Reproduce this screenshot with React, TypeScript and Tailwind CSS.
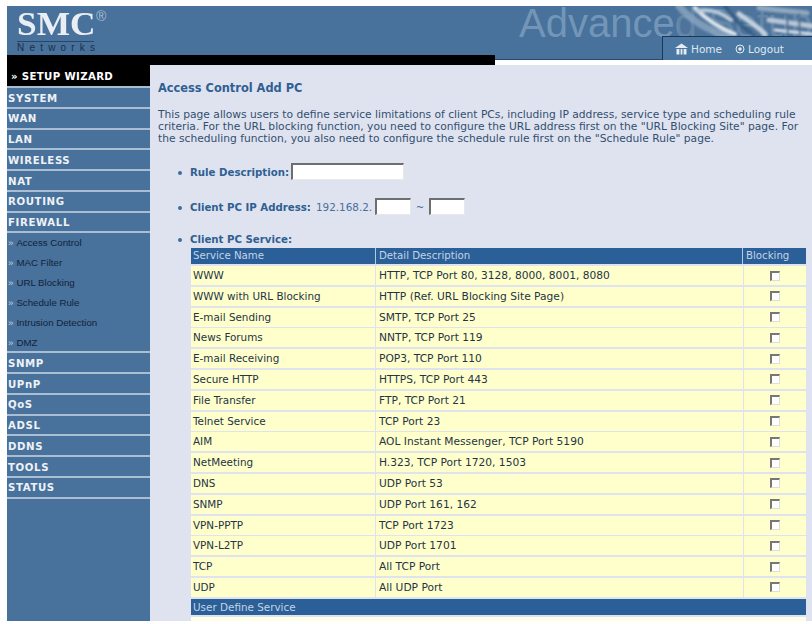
import type { ReactNode } from "react";

const menuTop = ["SYSTEM", "WAN", "LAN", "WIRELESS", "NAT", "ROUTING", "FIREWALL"];
const sub = ["Access Control", "MAC Filter", "URL Blocking", "Schedule Rule", "Intrusion Detection", "DMZ"];
const menuBottom = ["SNMP", "UPnP", "QoS", "ADSL", "DDNS", "TOOLS", "STATUS"];

const rows: [string, string][] = [
  ["WWW", "HTTP, TCP Port 80, 3128, 8000, 8001, 8080"],
  ["WWW with URL Blocking", "HTTP (Ref. URL Blocking Site Page)"],
  ["E-mail Sending", "SMTP, TCP Port 25"],
  ["News Forums", "NNTP, TCP Port 119"],
  ["E-mail Receiving", "POP3, TCP Port 110"],
  ["Secure HTTP", "HTTPS, TCP Port 443"],
  ["File Transfer", "FTP, TCP Port 21"],
  ["Telnet Service", "TCP Port 23"],
  ["AIM", "AOL Instant Messenger, TCP Port 5190"],
  ["NetMeeting", "H.323, TCP Port 1720, 1503"],
  ["DNS", "UDP Port 53"],
  ["SNMP", "UDP Port 161, 162"],
  ["VPN-PPTP", "TCP Port 1723"],
  ["VPN-L2TP", "UDP Port 1701"],
  ["TCP", "All TCP Port"],
  ["UDP", "All UDP Port"],
];

function MenuItem({ label }: { label: string }) {
  return (
    <div className="h-[20.75px] shrink-0 flex items-center pl-px pt-[2px] border-b-2 border-[#a9bdd3] text-[10.2px] font-bold tracking-[0.6px] text-[#eef2f7]">
      {label}
    </div>
  );
}

function Field({ children }: { children: ReactNode }) {
  return (
    <div className="flex items-center text-[10.2px] font-bold text-[#2f5f93]">
      <span className="w-[4px] h-[4px] rounded-full bg-[#3f6d9b] ml-[28px] mr-[8px]" />
      {children}
    </div>
  );
}

function TextBox({ w }: { w: string }) {
  return <div className={`${w} h-[17px] mb-[3px] bg-white border-t-2 border-l-2 border-t-[#6e6e6e] border-l-[#6e6e6e] border-r border-b border-r-[#e8e8e8] border-b-[#e8e8e8]`} />;
}

export default function App() {
  return (
    <div className="w-[812px] h-[624px] overflow-hidden bg-white pt-[6px] pl-[7px] font-['DejaVu_Sans',sans-serif]">
      <header className="relative h-[54px] w-[805px] overflow-hidden bg-[#48719b]">
        <div className="absolute left-[10px] top-[1px] font-['Liberation_Serif',serif] font-bold text-[34px] leading-[34px] text-[#e9eef4] [transform:scaleX(1.04)] origin-left">SMC</div>
        <div className="absolute left-[89px] top-[3px] text-[14px] leading-[14px] text-[#a9bfd4] font-['Liberation_Sans',sans-serif]">®</div>
        <div className="absolute left-[10px] top-[35px] w-[77px] border-t border-[#24486d]" />
        <div className="absolute left-[10px] top-[36px] text-[10px] leading-[11px] tracking-[5.2px] text-[#1c2f45] font-['Liberation_Sans',sans-serif]">Networks</div>
        <div className="absolute left-[512px] top-[-3px] font-['Liberation_Sans',sans-serif] text-[40px] leading-[40px] text-[#7396b8] whitespace-nowrap">Advanced Setup</div>
        <svg className="absolute left-[640px] top-0" width="165" height="30" viewBox="0 0 165 30">
          <defs>
            <filter id="soft"><feGaussianBlur stdDeviation="1.1" /></filter>
          </defs>
          <rect x="30" width="135" height="30" fill="#54789c" opacity="0.55" filter="url(#soft)" />
          <g fill="none" strokeLinecap="round" filter="url(#soft)">
            <path d="M32 0 C42 12 58 24 82 30" stroke="#8ba6c0" strokeWidth="7" opacity="0.8" />
            <path d="M48 2 C60 14 72 22 88 28" stroke="#dbe4ec" strokeWidth="4" />
            <path d="M50 5 C62 3 74 6 84 14" stroke="#b9cada" strokeWidth="4" />
            <path d="M78 0 C84 8 92 20 106 28" stroke="#2f587f" strokeWidth="4" opacity="0.8" />
            <path d="M92 8 C100 14 110 20 118 28" stroke="#c3d1de" strokeWidth="5" />
            <path d="M112 2 L160 7" stroke="#8fa8bf" strokeWidth="5" />
            <path d="M122 14 L165 20" stroke="#b7c6d4" strokeWidth="5" />
            <path d="M128 24 L165 28" stroke="#d4dee7" strokeWidth="3" />
            <path d="M140 8 L141 30 M152 8 L153 30" stroke="#4d7094" strokeWidth="2" />
          </g>
        </svg>
        <div className="absolute left-[488px] bottom-0 w-[167px] h-px bg-[#2a4a6c]" />
        <div className="absolute left-0 top-[49px] w-[488px] h-[5px] bg-black" />
        <div className="absolute left-[655px] top-[30px] w-[150px] h-[24px] bg-[#4b78a3] border-l border-t border-[#1c3653] flex items-center pl-[12px] pt-px gap-[13px] text-[10.5px] leading-none text-[#dfe7ef]">
          <span className="flex items-center gap-[3px]">
            <svg width="13" height="12" viewBox="0 0 13 12" fill="#e6ecf2">
              <path d="M6.5 0.5 L13 5 L0 5 Z" />
              <path d="M1.5 6 H4.4 V11.5 H1.5 Z M5.6 6 H7.4 V11.5 H5.6 Z M8.6 6 H11.5 V11.5 H8.6 Z" />
            </svg>
            Home
          </span>
          <span className="flex items-center gap-[3px]">
            <svg width="10" height="10" viewBox="0 0 10 10" fill="none">
              <circle cx="5" cy="5" r="4" stroke="#e6ecf2" strokeWidth="1" />
              <circle cx="5" cy="5" r="1.7" fill="#e6ecf2" />
            </svg>
            Logout
          </span>
        </div>
      </header>

      <div className="relative flex h-[561px]">
        <div className="absolute left-[143px] top-0 h-[5px] w-[345px] bg-black" />

        <aside className="w-[143px] shrink-0 bg-[#48719b] flex flex-col">
          <div className="h-[28px] shrink-0 bg-black pt-[7px] pl-[4px] text-[10.2px] font-bold tracking-[0.35px] leading-[20px] text-white border-b-2 border-[#a9bdd3]">
            » SETUP WIZARD
          </div>
          {menuTop.map((m) => <MenuItem key={m} label={m} />)}
          <div className="h-[120px] shrink-0 border-b-2 border-[#a9bdd3] font-['Liberation_Sans',sans-serif]">
            {sub.map((s) => (
              <div key={s} className="h-[20px] flex items-center pl-px text-[9.7px] text-[#10233a]">
                <span className="text-[#c3d1df]">»</span>
                <span className="ml-[3px]">{s}</span>
              </div>
            ))}
          </div>
          {menuBottom.map((m) => <MenuItem key={m} label={m} />)}
        </aside>

        <main className="flex-1 mt-[5px] bg-[#dfe3ef] pt-[15px] overflow-hidden">
          <h1 className="pl-[8px] text-[11.4px] leading-[16px] font-bold text-[#2f5f93]">Access Control Add PC</h1>
          <p className="mt-[13px] pl-[8px] text-[10.7px] leading-[12px] text-[#324f70] w-[656px]">
            This page allows users to define service limitations of client PCs, including IP address, service type and scheduling rule criteria. For the URL blocking function, you need to configure the URL address first on the "URL Blocking Site" page. For the scheduling function, you also need to configure the schedule rule first on the "Schedule Rule" page.
          </p>
          <div className="mt-[18px]">
            <Field>
              Rule Description:
              <span className="w-[2px]" />
              <TextBox w="w-[113px]" />
            </Field>
          </div>
          <div className="mt-[15px]">
            <Field>
              Client PC IP Address:
              <span className="ml-[5px] font-normal text-[10.4px] text-[#47709c]">192.168.2.</span>
              <span className="w-[3px]" />
              <TextBox w="w-[36px]" />
              <span className="w-[18px] text-center font-normal text-[#47709c]">~</span>
              <TextBox w="w-[36px]" />
            </Field>
          </div>
          <div className="mt-[16px] leading-[12px]">
            <Field>Client PC Service:</Field>
          </div>
          <div className="ml-[41px] mt-[2px] w-[615px] text-[10.4px] text-[#243446]">
            <div className="grid grid-cols-[184px_367px_62px] gap-x-px h-[16px] leading-[16px] text-[10.2px] text-[#c3d4e6] bg-[#2b5f97] mb-[2px]">
              <span className="pl-[2px]">Service Name</span>
              <span className="pl-[3px] border-l border-[#b9c8da] -ml-px">Detail Description</span>
              <span className="pl-[3px] border-l border-[#b9c8da] -ml-[2px]">Blocking</span>
            </div>
            {rows.map(([a, b]) => (
              <div key={a} className="grid grid-cols-[184px_367px_62px] gap-x-px h-[19px] mb-[1.8px] leading-[19px]">
                <span className="bg-[#ffffcc] pl-[2px]">{a}</span>
                <span className="bg-[#ffffcc] pl-[3px] text-[10.67px]">{b}</span>
                <span className="bg-[#ffffcc] flex items-center justify-center">
                  <span className="w-[10px] h-[10px] bg-white border-t-2 border-l-2 border-t-[#777] border-l-[#777] border-r border-b border-r-[#ddd] border-b-[#ddd]" />
                </span>
              </div>
            ))}
            <div className="h-[16px] leading-[16px] mt-[2px] pl-[2px] bg-[#2b5f97] text-[#c3d4e6]">User Define Service</div>
            <div className="h-[4px] mt-[2px] bg-[#ffffe8]" />
          </div>
        </main>
      </div>
    </div>
  );
}
